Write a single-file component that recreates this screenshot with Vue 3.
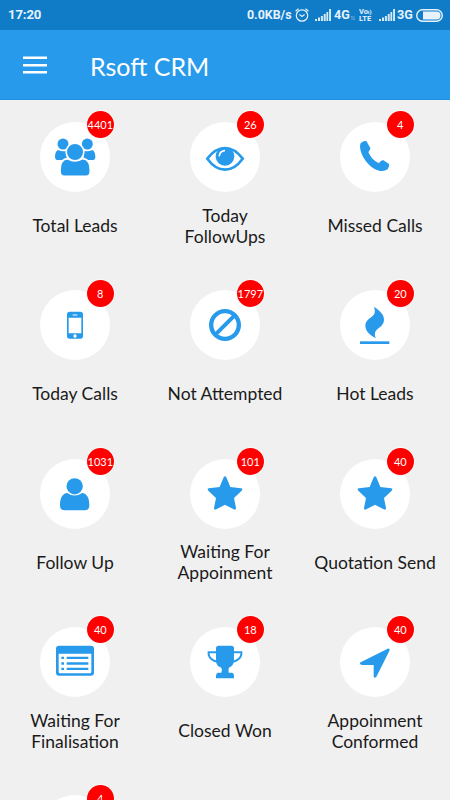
<script setup>
const tiles = [
  { icon: 'group', count: 4401, lines: ['Total Leads'] },
  { icon: 'eye', count: 26, lines: ['Today', 'FollowUps'] },
  { icon: 'phone', count: 4, lines: ['Missed Calls'] },
  { icon: 'mobile', count: 8, lines: ['Today Calls'] },
  { icon: 'ban', count: 1797, lines: ['Not Attempted'] },
  { icon: 'flame', count: 20, lines: ['Hot Leads'] },
  { icon: 'person', count: 1031, lines: ['Follow Up'] },
  { icon: 'star', count: 101, lines: ['Waiting For', 'Appoinment'] },
  { icon: 'star', count: 40, lines: ['Quotation Send'] },
  { icon: 'list', count: 40, lines: ['Waiting For', 'Finalisation'] },
  { icon: 'trophy', count: 18, lines: ['Closed Won'] },
  { icon: 'arrow', count: 40, lines: ['Appoinment', 'Conformed'] },
  { icon: 'person', count: 4, lines: [] },
]
</script>

<template>
  <div class="screen">
    <div class="status">
      <span class="time">17:20</span>
      <div class="indicators">
        <span class="speed">0.0KB/s</span>
        <svg class="alarm" viewBox="0 0 14 14"><circle cx="7" cy="7.5" r="5.7" /><path d="M.6 3.2 3.5 .8M13.4 3.2 10.5 .8M4.5 6.5 7 8.4 9.6 6.5" /></svg>
        <svg class="signal" viewBox="0 0 16 12"><path d="M0 10h2v2H0zM3 8.5h2V12H3zM5.9 7h2v5h-2zM8.7 5h2v7h-2zM11.4 3h1.8v9h-1.8zM14.1 0H16v12h-1.9z" /></svg>
        <span class="net four">4G</span>
        <svg class="data" viewBox="0 0 5 5"><path d="M1.3 5V0M0 1.5 1.3 0M3.7 0v5M5 3.5 3.7 5" /></svg>
        <span class="volte"><span>Vo<i>ı)</i></span><span class="lte">LTE</span></span>
        <svg class="signal" viewBox="0 0 16 12"><path d="M0 10h2v2H0zM3 8.5h2V12H3zM5.9 7h2v5h-2zM8.7 5h2v7h-2zM11.4 3h1.8v9h-1.8zM14.1 0H16v12h-1.9z" /></svg>
        <span class="net three">3G</span>
        <svg class="battery" viewBox="0 0 27 13"><rect x=".7" y=".7" width="25.6" height="11.6" rx="5.8" /><path d="M7 2.5h13.5a4 4 0 0 1 0 8H7z" /></svg>
      </div>
    </div>
    <header class="bar">
      <svg class="menu" viewBox="0 0 24 18"><path d="M0 1.8h24M0 9.3h24M0 16.2h24" /></svg>
      <h1>Rsoft CRM</h1>
    </header>
    <main class="grid">
      <div v-for="(t, i) in tiles" :key="i" class="tile">
        <div class="disc">
          <svg class="icon" viewBox="0 0 210 210">
            <g v-if="t.icon === 'group'">
              <circle cx="69" cy="66" r="16.5" /><circle cx="142" cy="66" r="16.5" />
              <path d="M54 84C48 87 45 95 45 104Q45 114 54 114H80V86Q69 90 54 84ZM157 84C163 87 166 95 166 104Q166 114 157 114H131V86Q142 90 157 84Z" />
              <circle cx="105" cy="90" r="26.5" class="gap" />
              <path class="gap" d="M83 110C68 111 60 124 60 146Q60 163 73 163H138Q151 163 151 146C151 124 143 111 128 110Q106 124 83 110Z" />
            </g>
            <g v-else-if="t.icon === 'eye'">
              <path class="line" d="M52 110Q76 78 105 78T158 110Q134 143 105 143T52 110Z" />
              <circle cx="105" cy="103" r="28" /><path class="shine" d="M88 101Q90 88 103 86" />
            </g>
            <path v-else-if="t.icon === 'phone'" d="M79 57Q70 55 62 64C58 73 61 88 69 104C79 123 99 142 118 146Q132 149 143 142Q150 133 147 126L129 114Q120 117 117 124C102 117 91 105 85 90Q91 85 91 78Z" />
            <g v-else-if="t.icon === 'mobile'">
              <path fill-rule="evenodd" d="M89 65H121Q129 65 129 73V138Q129 146 121 146H89Q81 146 81 138V73Q81 65 89 65ZM86 83V130H124V83Z" />
              <path class="detail" d="M98 75h14" /><circle class="button" cx="105" cy="138" r="5" />
            </g>
            <g v-else-if="t.icon === 'ban'"><circle class="ban" cx="105" cy="105" r="41.5" /><path class="ban slash" d="M76 134 134 76" /></g>
            <g v-else-if="t.icon === 'flame'">
              <path d="M102 50C113 58 133 70 132 90C131 111 108 115 105 128Q103 136 108 145C94 137 77 127 76 108C76 86 99 84 104 69Q106 61 102 50Z" />
              <rect x="60" y="154" width="88" height="8" />
            </g>
            <g v-else-if="t.icon === 'person'">
              <circle cx="104" cy="82" r="24.5" />
              <path d="M82 102C67 103 60 118 60 138Q60 154 73 154H135Q148 154 148 138C148 118 141 103 126 102Q104 117 82 102Z" />
            </g>
            <path v-else-if="t.icon === 'star'" d="M101 55Q105 48 109 55L121 84 153 88Q160 89 155 95L132 117 138 147Q138 155 131 151L105 137 79 151Q72 155 72 147L78 117 55 95Q50 89 57 88L89 84Z" />
            <g v-else-if="t.icon === 'list'">
              <path fill-rule="evenodd" d="M57 56H153Q162 56 162 65V137Q162 146 153 146H57Q48 146 48 137V65Q48 56 57 56ZM56 80V134Q56 139 61 139H149Q154 139 154 134V80Z" />
              <path d="M64 89h8v7h-8zM64 106h8v7h-8zM64 122h8v7h-8zM80 89h65v7H80zM80 106h65v7H80zM80 122h65v7H80z" />
            </g>
            <g v-else-if="t.icon === 'trophy'">
              <path d="M86 56H124Q132 56 132 64V96C132 112 126 118 118 121Q113 126 116 137H126Q133 138 132 154H78Q77 138 84 137H94Q98 126 92 121C83 118 78 112 78 96V64Q78 56 86 56Z" />
              <path class="handle" d="M80 76H56V83Q60 98 81 104M130 76H154V83Q150 98 129 104" />
            </g>
            <path v-else d="M143 65Q150 63 149 70L110 148Q105 156 101 149V114H66Q56 111 62 106Z" />
          </svg>
          <span class="badge">{{ t.count }}</span>
        </div>
        <div class="label"><span v-for="l in t.lines" :key="l">{{ l }}</span></div>
      </div>
    </main>
  </div>
</template>

<style>
body { margin: 0; overflow: hidden; }
</style>

<style scoped>
.screen { width: 450px; height: 800px; overflow: hidden; background: #f0f0f0; font-family: Lato, sans-serif; }
.status { height: 30px; box-sizing: border-box; padding: 0 7px 0 8px; display: flex; align-items: center; justify-content: space-between; background: #107bc7; color: #e6f3fc; font: 700 13px/30px Roboto, sans-serif; }
.time { font-size: 13.2px; letter-spacing: -0.15px; }
.indicators { display: flex; align-items: center; height: 30px; }
.speed { font-size: 12.4px; width: 45px; white-space: nowrap; }
.alarm { width: 14px; height: 14px; margin-left: 3px; fill: none; stroke: #e6f3fc; stroke-width: 1.2; }
.signal { width: 16px; height: 12px; margin-left: 6px; fill: #d5eaf8; }
.net { font-size: 12.6px; width: 16px; white-space: nowrap; }
.four { margin-left: 3px; }
.three { margin-left: 2px; }
.data { width: 4px; height: 4px; margin: 5px 0 0 1px; fill: none; stroke: #76b5e2; stroke-width: 1; }
.volte { display: flex; flex-direction: column; width: 14px; margin-left: 4px; font-size: 7.4px; line-height: 7.5px; white-space: nowrap; }
.volte i { font-size: 6px; font-style: normal; line-height: 1; }
.lte { font-size: 7.6px; }
.battery { width: 27px; height: 13px; margin-left: 3px; }
.battery rect { fill: none; stroke: #e6f3fc; stroke-width: 1.4; }
.battery path { fill: #e6f3fc; }
.bar { height: 70px; box-sizing: border-box; padding-left: 23px; display: flex; align-items: center; background: #289aec; border-bottom: 1px solid #1f8fe0; color: #fff; }
.menu { width: 24px; height: 18px; stroke: #fff; stroke-width: 2.5; }
h1 { margin: 2px 0 0 43px; font-size: 25px; font-weight: 400; line-height: 32px; }
.grid { display: grid; grid-template-columns: repeat(3, 150px); grid-auto-rows: 168.35px; }
.tile { display: flex; flex-direction: column; align-items: center; padding-top: 22px; box-sizing: border-box; }
.disc { position: relative; width: 70px; height: 70px; flex: none; border-radius: 50%; background: #fff; }
.icon { display: block; width: 70px; height: 70px; fill: #289aec; }
.gap { stroke: #fff; stroke-width: 5; }
.line { fill: none; stroke: #289aec; stroke-width: 8; }
.shine { fill: none; stroke: #fff; stroke-width: 5; stroke-linecap: round; }
.detail { stroke: #fff; stroke-width: 3; }
.button { fill: #fff; }
.ban { fill: none; stroke: #289aec; stroke-width: 13; }
.slash { stroke-width: 12; }
.handle { fill: none; stroke: #289aec; stroke-width: 6; }
.badge { position: absolute; top: -10.6px; left: 46.8px; width: 27px; height: 27px; display: flex; align-items: center; justify-content: center; border-radius: 50%; background: #f00; box-shadow: 0 0 0 1px #f8f8f8; color: #fff; font-size: 11px; line-height: 27px; }
.label { height: 67px; display: flex; flex-direction: column; justify-content: center; align-items: center; font-size: 17.5px; line-height: 21px; color: #1a1a1a; white-space: nowrap; }
</style>
